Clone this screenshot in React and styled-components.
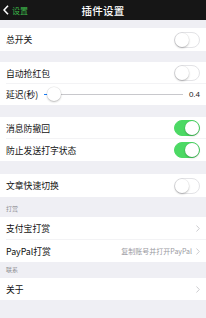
import React from "react";
import styled, { createGlobalStyle } from "styled-components";

const Global = createGlobalStyle`
  html, body { margin: 0; padding: 0; }
  body {
    background: #efeff4;
    font-family: "Noto Sans CJK SC", "Noto Sans", sans-serif;
    -webkit-font-smoothing: antialiased;
  }
`;

const Page = styled.div`
  width: 206px;
  height: 318px;
  background: #efeff4;
  display: flex;
  flex-direction: column;
  overflow: hidden;
`;

const NavBar = styled.div`
  height: 20px;
  background: #161616;
  position: relative;
  display: flex;
  align-items: center;
  justify-content: center;
`;

const Back = styled.div`
  position: absolute;
  left: 3px;
  top: 0;
  height: 20px;
  display: flex;
  align-items: center;
  gap: 3px;
  color: #3cb94a;
  font-size: 8px;
`;

const Title = styled.div`
  color: #fff;
  font-size: 10.5px;
  font-weight: 500;
  letter-spacing: 0.2px;
`;

const Gap = styled.div`
  height: ${(p) => p.h}px;
`;

const SectionHeader = styled.div`
  height: ${(p) => p.h}px;
  box-sizing: border-box;
  padding-left: 6px;
  padding-bottom: 4px;
  display: flex;
  align-items: flex-end;
  font-size: 6px;
  color: #8e8e93;
`;

const Group = styled.div`
  background: #fff;
  display: flex;
  flex-direction: column;
`;

const Row = styled.div`
  height: ${(p) => p.h || 22}px;
  box-sizing: border-box;
  padding: 0 6px 0 6px;
  display: flex;
  align-items: center;
  position: relative;
  &:not(:last-child)::after {
    content: "";
    position: absolute;
    left: 6px;
    right: 0;
    bottom: 0;
    height: 1px;
    background: #f3f3f5;
  }
`;

const Label = styled.span`
  font-size: 8.8px;
  color: #111;
  flex: none;
`;

const Spacer = styled.div`
  flex: 1;
`;

const Detail = styled.span`
  font-size: 7px;
  color: #9a9a9f;
  margin-right: 4px;
`;

const Switch = styled.div`
  width: 26px;
  height: 16px;
  border-radius: 8px;
  box-sizing: border-box;
  background: ${(p) => (p.on ? "#4cd964" : "#fff")};
  border: 1px solid ${(p) => (p.on ? "#4cd964" : "#e3e3e6")};
  position: relative;
  &::after {
    content: "";
    position: absolute;
    top: 0;
    left: ${(p) => (p.on ? "10px" : "0")};
    width: 14px;
    height: 14px;
    border-radius: 50%;
    background: #fff;
    box-shadow: 0 1px 2px rgba(0, 0, 0, 0.25), 0 0 0 0.5px rgba(0, 0, 0, 0.06);
  }
`;

const SliderTrack = styled.div`
  flex: 1;
  height: 1px;
  background: #c8c8cc;
  margin: 0 6px 0 6px;
  position: relative;
`;

const SliderFill = styled.div`
  position: absolute;
  left: 0;
  top: 0;
  height: 1px;
  background: #1a7cf5;
`;

const Knob = styled.div`
  position: absolute;
  top: -7px;
  width: 14px;
  height: 14px;
  margin-left: -7px;
  border-radius: 50%;
  background: #fff;
  box-shadow: 0 1px 2px rgba(0, 0, 0, 0.25), 0 0 0 0.5px rgba(0, 0, 0, 0.08);
`;

const Value = styled.span`
  font-size: 8px;
  color: #222;
  font-family: "Liberation Sans", sans-serif;
`;

const Chevron = () => (
  <svg width="4" height="7" viewBox="0 0 4 7">
    <path d="M0.5 0.5 L3.3 3.5 L0.5 6.5" fill="none" stroke="#c7c7cc" strokeWidth="0.9" />
  </svg>
);

const BackChevron = () => (
  <svg width="6" height="10" viewBox="0 0 6 10">
    <path d="M5 0.8 L1 5 L5 9.2" fill="none" stroke="#fff" strokeWidth="1.6" />
  </svg>
);

const value = 0.4;
const pct = `${value * 17.5}%`;

export default function App() {
  return (
    <Page>
      <Global />
      <NavBar>
        <Back>
          <BackChevron />
          <span>设置</span>
        </Back>
        <Title>插件设置</Title>
      </NavBar>
      <Gap h={8} />
      <Group>
        <Row h={23}>
          <Label>总开关</Label>
          <Spacer />
          <Switch />
        </Row>
      </Group>
      <Gap h={11} />
      <Group>
        <Row>
          <Label>自动抢红包</Label>
          <Spacer />
          <Switch />
        </Row>
        <Row h={21}>
          <Label>延迟(秒)</Label>
          <SliderTrack>
            <SliderFill style={{ width: pct }} />
            <Knob style={{ left: pct }} />
          </SliderTrack>
          <Value>0.4</Value>
        </Row>
      </Group>
      <Gap h={12} />
      <Group>
        <Row>
          <Label>消息防撤回</Label>
          <Spacer />
          <Switch on />
        </Row>
        <Row>
          <Label>防止发送打字状态</Label>
          <Spacer />
          <Switch on />
        </Row>
      </Group>
      <Gap h={13} />
      <Group>
        <Row h={23}>
          <Label>文章快速切换</Label>
          <Spacer />
          <Switch />
        </Row>
      </Group>
      <SectionHeader h={20}>打赏</SectionHeader>
      <Group>
        <Row h={23}>
          <Label>支付宝打赏</Label>
          <Spacer />
          <Chevron />
        </Row>
        <Row>
          <Label>PayPal打赏</Label>
          <Spacer />
          <Detail>复制账号并打开PayPal</Detail>
          <Chevron />
        </Row>
      </Group>
      <SectionHeader h={16}>联系</SectionHeader>
      <Group>
        <Row>
          <Label>关于</Label>
          <Spacer />
          <Chevron />
        </Row>
      </Group>
    </Page>
  );
}
